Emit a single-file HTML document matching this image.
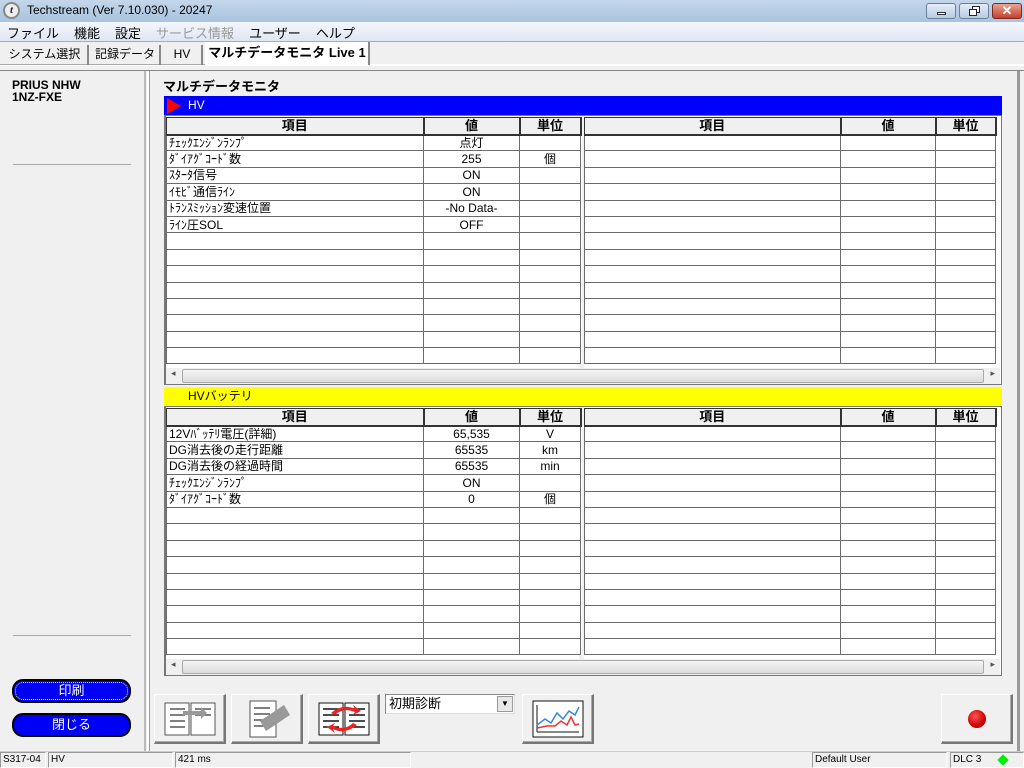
<!DOCTYPE html>
<html><head><meta charset="utf-8"><style>
*{margin:0;padding:0;box-sizing:border-box}
body{width:1024px;height:768px;overflow:hidden;background:#f0f0f0;font-family:"Liberation Sans","Noto Sans CJK JP",sans-serif;font-size:12px;color:#000;position:relative}
.a{position:absolute}
.title{left:0;top:0;width:1024px;height:22px;background:linear-gradient(#c4d6ea,#a9c3df);}
.menu{left:0;top:22px;width:1024px;height:20px;background:linear-gradient(#f4f6fb,#dfe6f3);border-bottom:1px solid #aab}
.menu span{margin-right:15px;font-size:13px}
.tabs{left:0;top:42px;width:1024px;height:24px;background:#f0f0f0;border-bottom:2px solid #fff}
.tab{top:45px;height:20px;font-size:12px;border-right:2px solid #888;line-height:18px;text-align:center;white-space:nowrap;overflow:hidden}
table{border-collapse:collapse;table-layout:fixed}
td{border:1px solid #6c6c6c;height:16.4px;font-size:12px;line-height:14px;padding:0 2px;white-space:nowrap;overflow:hidden}
th{border:1px solid #333;border-right-width:2px;border-bottom:2px solid #333;height:17px;font-size:13px;background:#f0f0f0;font-weight:bold;line-height:14px}
td.c{text-align:center}
.sb{height:16px;background:#f0f0f0}
.sb .th{position:absolute;left:16px;right:16px;top:1px;bottom:1px;background:linear-gradient(#f4f4f4,#dcdcdc);border:1px solid #aaa;border-radius:2px}
.btn{background:#f0f0f0;border:1px solid #fff;border-right:2px solid #777;border-bottom:2px solid #777;box-shadow:inset -1px -1px #aaa}
.pill{left:12px;width:119px;height:24px;background:#0000f5;border:2px solid #000;border-radius:11px;color:#fff;text-align:center;font-size:13px;line-height:20px}
.st{top:752px;height:16px;border:1px solid #999;border-right-color:#fff;border-bottom-color:#fff;font-size:10px;line-height:14px;padding-left:2px}
</style></head><body>
<div class="a title"></div>
<div class="a" style="left:3px;top:2px;width:17px;height:17px;border-radius:50%;background:#eee;border:2px solid #888;font:italic bold 11px 'Liberation Serif';color:#223;text-align:center;line-height:13px">t</div>
<div class="a" style="left:27px;top:3px;font-size:12px">Techstream (Ver 7.10.030) - 20247</div>
<div class="a" style="left:926px;top:3px;width:30px;height:16px;border:1px solid #6a7f99;border-radius:3px;background:linear-gradient(#e4edf7,#b7cbe2)"><div class="a" style="left:10px;top:8px;width:9px;height:3px;background:#fff;border:1px solid #334"></div></div>
<div class="a" style="left:959px;top:3px;width:30px;height:16px;border:1px solid #6a7f99;border-radius:3px;background:linear-gradient(#e4edf7,#b7cbe2)"><div class="a" style="left:12px;top:2px;width:8px;height:7px;border:1px solid #223;background:#fff"></div><div class="a" style="left:9px;top:5px;width:8px;height:7px;border:1px solid #223;background:#fff"></div></div>
<div class="a" style="left:992px;top:3px;width:30px;height:16px;border:1px solid #7a2a22;border-radius:3px;background:linear-gradient(#e8a595,#c4402c);color:#fff;font-weight:bold;text-align:center;line-height:13px;font-size:13px">✕</div>
<div class="a menu"><div style="padding:1px 0 0 7px"><span>ファイル</span><span>機能</span><span>設定</span><span style="color:#999">サービス情報</span><span>ユーザー</span><span>ヘルプ</span></div></div>
<div class="a tabs"></div>
<div class="a" style="left:0;top:44px;width:370px;height:21px;border-bottom:1px solid #aaa"></div>
<div class="a tab" style="left:2px;width:87px">システム選択</div>
<div class="a tab" style="left:91px;width:70px">記録データ</div>
<div class="a tab" style="left:163px;width:40px">HV</div>
<div class="a tab" style="left:205px;width:165px;background:#fff;font-weight:bold;font-size:13px;height:23px;top:42px;line-height:22px;border-left:1px solid #fff">マルチデータモニタ Live 1</div>
<div class="a" style="left:0;top:66px;width:1024px;height:5px;background:#f0f0f0;border-bottom:1px solid #888"></div>
<!-- left panel -->
<div class="a" style="left:0;top:71px;width:146px;height:680px;background:#f0f0f0;border-right:2px solid #bbb"></div>
<div class="a" style="left:147px;top:71px;width:3px;height:680px;background:#fff;border-right:1px solid #999"></div>
<div class="a" style="left:12px;top:79px;font-weight:bold;font-size:12px;line-height:12px">PRIUS NHW<br>1NZ-FXE</div>
<div class="a" style="left:13px;top:164px;width:118px;height:1px;background:#aaa"></div>
<div class="a" style="left:13px;top:635px;width:118px;height:1px;background:#aaa"></div>
<div class="a pill" style="top:679px;outline:1px dotted #ff0;outline-offset:-4px">印刷</div>
<div class="a pill" style="top:713px">閉じる</div>
<!-- right border -->
<div class="a" style="left:1017px;top:71px;width:3px;height:680px;background:#999"></div>
<div class="a" style="left:163px;top:76px;font-weight:bold;font-size:13px">マルチデータモニタ</div>
<!-- HV bar -->
<div class="a" style="left:164px;top:96px;width:838px;height:19px;background:#0000ff;color:#fff;font-size:12px;line-height:19px;padding-left:24px">HV</div>
<svg class="a" style="left:166px;top:98px" width="16" height="16"><polygon points="1,0 15,8 1,16" fill="#f00"/></svg>
<!-- table 1 -->
<div class="a" style="left:164px;top:115px;width:838px;height:270px;border:1px solid #777;border-left:2px solid #777;background:#fff"></div>
<div class="a" style="left:579px;top:116px;width:5px;height:252px;background:#f0f0f0"></div>
<table class="a" id="t1" style="left:166px;top:117px;width:414px;background:#fff"></table>
<table class="a" id="t2" style="left:584px;top:117px;width:412px;background:#fff"></table>
<div class="a sb" style="left:166px;top:368px;width:834px"><div class="th"></div><span class="a" style="left:5px;top:0;font-size:9px;color:#555">◂</span><span class="a" style="right:5px;top:0;font-size:9px;color:#555">▸</span></div>
<!-- yellow bar -->
<div class="a" style="left:164px;top:387px;width:838px;height:19px;background:#ffff00;font-size:12px;line-height:19px;padding-left:24px">HVバッテリ</div>
<div class="a" style="left:164px;top:406px;width:838px;height:270px;border:1px solid #777;border-left:2px solid #777;background:#fff"></div>
<div class="a" style="left:579px;top:407px;width:5px;height:252px;background:#f0f0f0"></div>
<table class="a" id="t3" style="left:166px;top:408px;width:414px;background:#fff"></table>
<table class="a" id="t4" style="left:584px;top:408px;width:412px;background:#fff"></table>
<div class="a sb" style="left:166px;top:659px;width:834px"><div class="th"></div><span class="a" style="left:5px;top:0;font-size:9px;color:#555">◂</span><span class="a" style="right:5px;top:0;font-size:9px;color:#555">▸</span></div>
<!-- bottom buttons -->
<div class="a btn" style="left:154px;top:694px;width:72px;height:50px"><svg width="70" height="48"><g fill="#fff" stroke="#555"><rect x="10" y="8" width="24" height="32"/><rect x="36" y="8" width="24" height="32"/></g><g stroke="#555" stroke-width="1.5"><line x1="15" y1="14" x2="30" y2="14"/><line x1="15" y1="20" x2="30" y2="20"/><line x1="15" y1="26" x2="30" y2="26"/><line x1="15" y1="32" x2="30" y2="32"/><line x1="40" y1="14" x2="56" y2="14"/><line x1="40" y1="20" x2="56" y2="20"/></g><polygon points="28,16 46,16 46,12 52,18 46,24 46,20 28,20" fill="#999"/></svg></div>
<div class="a btn" style="left:231px;top:694px;width:72px;height:50px"><svg width="70" height="48"><rect x="18" y="6" width="26" height="36" fill="#fff" stroke="#555"/><g stroke="#555" stroke-width="1.5"><line x1="22" y1="13" x2="38" y2="13"/><line x1="22" y1="19" x2="38" y2="19"/><line x1="22" y1="25" x2="38" y2="25"/><line x1="22" y1="31" x2="38" y2="31"/></g><polygon points="28,26 52,10 58,20 34,36" fill="#999"/></svg></div>
<div class="a btn" style="left:308px;top:694px;width:72px;height:50px"><svg width="70" height="48"><g fill="#fff" stroke="#111"><rect x="10" y="8" width="24" height="32"/><rect x="36" y="8" width="24" height="32"/></g><g stroke="#111" stroke-width="1.5"><line x1="14" y1="14" x2="30" y2="14"/><line x1="14" y1="20" x2="30" y2="20"/><line x1="14" y1="26" x2="30" y2="26"/><line x1="14" y1="32" x2="30" y2="32"/><line x1="40" y1="14" x2="56" y2="14"/><line x1="40" y1="20" x2="56" y2="20"/><line x1="40" y1="26" x2="56" y2="26"/><line x1="40" y1="32" x2="56" y2="32"/></g><path d="M22 18 Q34 8 46 14 L44 10 L52 16 L44 20 L46 17 Q34 12 26 20Z M48 30 Q36 40 24 34 L26 38 L18 32 L26 28 L24 31 Q36 36 44 28Z" fill="#e22"/></svg></div>
<div class="a" style="left:385px;top:694px;width:130px;height:20px;background:#fff;border:1px solid #888;border-right-color:#ddd;border-bottom-color:#ddd;font-size:13px;line-height:17px;padding-left:3px">初期診断<div class="a" style="right:1px;top:1px;width:16px;height:16px;background:#e8e8e8;border:1px solid #999;font-size:8px;text-align:center;line-height:14px">▼</div></div>
<div class="a btn" style="left:522px;top:694px;width:72px;height:50px"><svg width="70" height="48"><rect x="10" y="6" width="50" height="36" fill="#fff" stroke="#111"/><g stroke="#111"><line x1="14" y1="10" x2="14" y2="37"/><line x1="14" y1="37" x2="56" y2="37"/></g><polyline points="14,30 22,24 28,28 34,18 40,24 46,16 52,20 56,12" fill="none" stroke="#38d" stroke-width="1.5"/><polyline points="14,33 24,31 32,31 38,26 44,30 48,22 52,30 56,29" fill="none" stroke="#e33" stroke-width="1.5"/></svg></div>
<div class="a btn" style="left:941px;top:694px;width:72px;height:50px"><div class="a" style="left:26px;top:15px;width:18px;height:18px;border-radius:50%;background:radial-gradient(circle at 40% 35%,#f55,#c00 60%,#800)"></div></div>
<!-- status bar -->
<div class="a" style="left:0;top:751px;width:1024px;height:17px;background:#f0f0f0;border-top:1px solid #ccc"></div>
<div class="a st" style="left:0;width:46px">S317-04</div>
<div class="a st" style="left:48px;width:125px">HV</div>
<div class="a st" style="left:175px;width:236px">421 ms</div>
<div class="a st" style="left:812px;width:135px">Default User</div>
<div class="a st" style="left:950px;width:74px">DLC 3<span class="a" style="left:48px;top:3px;width:8px;height:8px;background:#0e0;transform:rotate(45deg)"></span></div>
<script>
function mk(id,w,rows,n){var t=document.getElementById(id);var h='<colgroup>'+w.map(x=>'<col style="width:'+x+'px">').join('')+'</colgroup><tr><th>項目</th><th>値</th><th>単位</th></tr>';
for(var i=0;i<n;i++){var r=rows[i]||['','',''];h+='<tr><td>'+r[0]+'</td><td class="c">'+r[1]+'</td><td class="c">'+r[2]+'</td></tr>';}t.innerHTML=h;}
var L=[257,96,61],R=[256,95,60];
mk('t1',L,[['ﾁｪｯｸｴﾝｼﾞﾝﾗﾝﾌﾟ','点灯',''],['ﾀﾞｲｱｸﾞｺｰﾄﾞ数','255','個'],['ｽﾀｰﾀ信号','ON',''],['ｲﾓﾋﾞ通信ﾗｲﾝ','ON',''],['ﾄﾗﾝｽﾐｯｼｮﾝ変速位置','-No Data-',''],['ﾗｲﾝ圧SOL','OFF','']],14);
mk('t2',R,[],14);
mk('t3',L,[['12Vﾊﾞｯﾃﾘ電圧(詳細)','65,535','V'],['DG消去後の走行距離','65535','km'],['DG消去後の経過時間','65535','min'],['ﾁｪｯｸｴﾝｼﾞﾝﾗﾝﾌﾟ','ON',''],['ﾀﾞｲｱｸﾞｺｰﾄﾞ数','0','個']],14);
mk('t4',R,[],14);
</script>
</body></html>
